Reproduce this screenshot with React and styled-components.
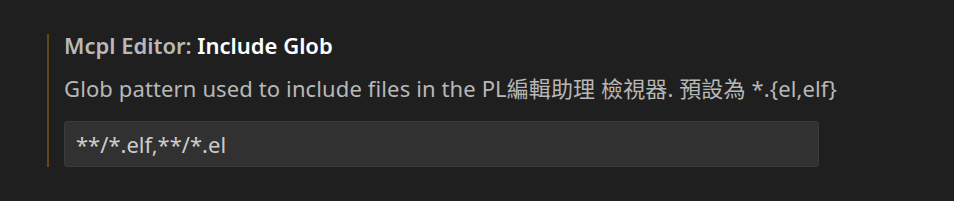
import React from "react";
import styled, { createGlobalStyle } from "styled-components";

const Global = createGlobalStyle`
  html, body { margin: 0; padding: 0; background: #1f1f1f; }
  body { width: 954px; height: 201px; overflow: hidden; }
`;

const Page = styled.div`
  padding: 34px 0 0 47px;
  font-family: "Noto Sans", "Noto Sans CJK TC", sans-serif;
`;

const Item = styled.div`
  border-left: 2px solid #5f4918;
  padding-left: 15px;
  width: 755px;
  display: flex;
  flex-direction: column;
`;

const Title = styled.div`
  margin-top: -4px;
  font-size: 22px;
  line-height: 30px;
  font-weight: 600;
  color: #b9b9b9;
`;

const Name = styled.span`
  color: #ffffff;
`;

const Desc = styled.div`
  margin-top: 13px;
  font-size: 22px;
  line-height: 30px;
  letter-spacing: 0.12px;
  color: #b8b8b8;
  white-space: nowrap;
`;

const Input = styled.div`
  margin-top: 18px;
  box-sizing: border-box;
  height: 46px;
  background: #313131;
  border: 1px solid #3c3c3c;
  border-radius: 3px;
  padding: 0 11px;
  display: flex;
  align-items: center;
  font-size: 22px;
  line-height: 30px;
  color: #cccccc;
`;

export default function App() {
  return (
    <>
      <Global />
      <Page>
        <Item>
          <Title>
            Mcpl Editor: <Name>Include Glob</Name>
          </Title>
          <Desc>Glob pattern used to include files in the PL編輯助理 檢視器. 預設為 *.{"{"}el,elf{"}"}</Desc>
          <Input>**/*.elf,**/*.el</Input>
        </Item>
      </Page>
    </>
  );
}
